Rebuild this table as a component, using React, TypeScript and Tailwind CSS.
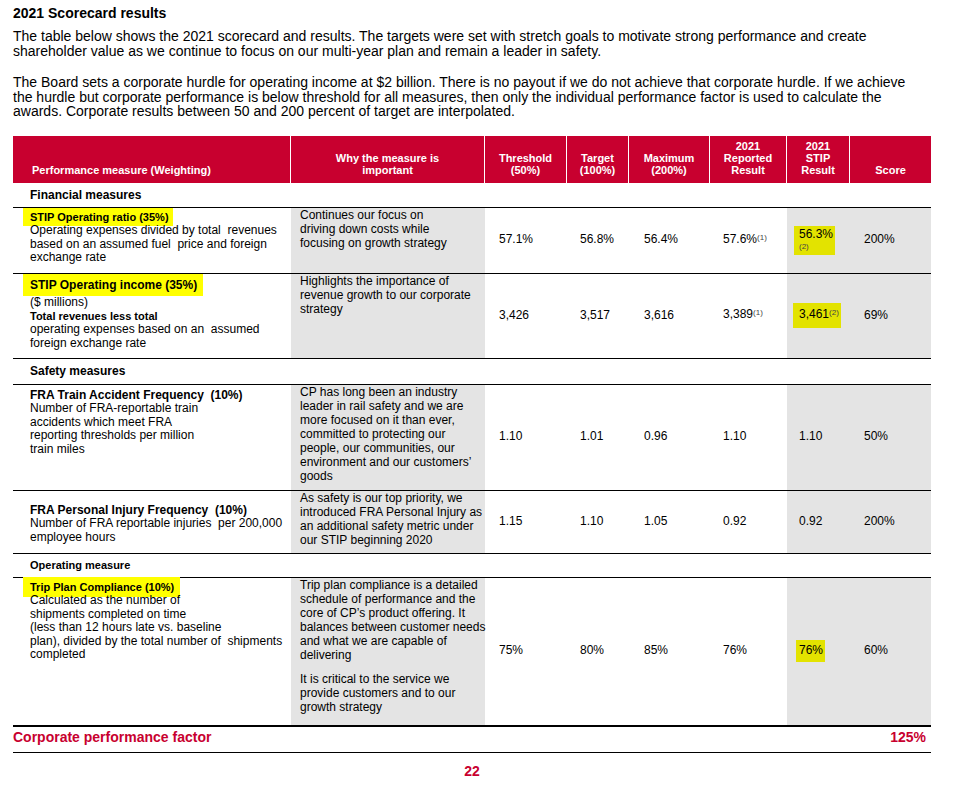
const cols = 'grid grid-cols-[278px_194px_82px_62px_81px_77px_63px_81px]';

const Hl = ({ children, className = '' }: { children: React.ReactNode; className?: string }) => (
  <span className={`bg-[#ffff00] ${className}`}>{children}</span>
);

const Sup = ({ n }: { n: string }) => (
  <span className="text-[8px] text-[#444] relative -top-[3px]">{n}</span>
);

type Nums = [React.ReactNode, React.ReactNode, React.ReactNode, React.ReactNode, React.ReactNode, React.ReactNode];

const Row = ({ h, left, why, nums, whyTop = 'pt-0' }: { h: string; left: React.ReactNode; why: React.ReactNode; nums: Nums; whyTop?: string }) => (
  <div className={`${cols} ${h} border-t border-black text-[12px] leading-[13.5px]`}>
    <div className="pl-[17px] pr-2">{left}</div>
    <div className={`bg-[#e4e4e4] pl-[9px] leading-[14px] whitespace-nowrap ${whyTop}`}>{why}</div>
    <div className="flex items-center pl-[14px]">{nums[0]}</div>
    <div className="flex items-center pl-[13px]">{nums[1]}</div>
    <div className="flex items-center pl-[15px]">{nums[2]}</div>
    <div className="flex items-center pl-[13px]">{nums[3]}</div>
    <div className="flex items-center bg-[#e4e4e4] pl-[12px]">{nums[4]}</div>
    <div className="flex items-center bg-[#e4e4e4] pl-[14px]">{nums[5]}</div>
  </div>
);

const Section = ({ label, h, small }: { label: string; h: string; small?: boolean }) => (
  <div className={`flex items-center pl-[17px] ${h} border-t border-black font-bold ${small ? 'text-[11px]' : 'text-[12px]'}`}>
    {label}
  </div>
);

export default function App() {
  return (
    <div className="w-[955px] h-[792px] bg-white text-black font-['Liberation_Sans',Arial,sans-serif] px-[13px] pt-[5px]">
      <h2 className="text-[14px] leading-[16px] font-bold">2021 Scorecard results</h2>
      <p className="mt-[8px] text-[14px] leading-[14.5px] whitespace-nowrap">
        The table below shows the 2021 scorecard and results. The targets were set with stretch goals to motivate strong performance and create
        <br />
        shareholder value as we continue to focus on our multi-year plan and remain a leader in safety.
      </p>
      <p className="mt-[17px] text-[14px] leading-[14.5px] whitespace-nowrap">
        The Board sets a corporate hurdle for operating income at $2 billion. There is no payout if we do not achieve that corporate hurdle. If we achieve
        <br />
        the hurdle but corporate performance is below threshold for all measures, then only the individual performance factor is used to calculate the
        <br />
        awards. Corporate results between 50 and 200 percent of target are interpolated.
      </p>

      <div className="mt-[17px] w-[918px]">
        <div className={`${cols} h-[47px] bg-[#c8002f] text-white font-bold text-[11px] leading-[12px]`}>
          <div className="flex items-end pb-[7px] pl-[19px] border-r border-white">Performance measure (Weighting)</div>
          <div className="flex items-end justify-center text-center pb-[7px] border-r border-white">Why the measure is<br />important</div>
          <div className="flex items-end justify-center text-center pb-[7px] border-r border-white">Threshold<br />(50%)</div>
          <div className="flex items-end justify-center text-center pb-[7px] border-r border-white">Target<br />(100%)</div>
          <div className="flex items-end justify-center text-center pb-[7px] border-r border-white">Maximum<br />(200%)</div>
          <div className="flex items-end justify-center text-center pb-[7px] border-r border-white">2021<br />Reported<br />Result</div>
          <div className="flex items-end justify-center text-center pb-[7px] border-r border-white">2021<br />STIP<br />Result</div>
          <div className="flex items-end justify-center text-center pb-[7px]">Score</div>
        </div>

        <div className="flex items-center pl-[17px] h-[24px] font-bold text-[12px]">Financial measures</div>

        <Row
          h="h-[66px]"
          left={
            <div className="pt-[3px] whitespace-nowrap">
              <Hl className="-ml-[7px] pl-[7px] pr-[4px] py-[3px] font-bold text-[11px]">STIP Operating ratio (35%)</Hl>
              <div>Operating expenses divided by total &nbsp;revenues</div>
              <div>based on an assumed fuel &nbsp;price and foreign</div>
              <div>exchange rate</div>
            </div>
          }
          why={<>Continues our focus on<br />driving down costs while<br />focusing on growth strategy</>}
          nums={[
            '57.1%',
            '56.8%',
            '56.4%',
            <span>57.6%<Sup n="(1)" /></span>,
            <span className="-ml-[5px] pl-[5px] pr-[2px] py-[3px] bg-[#e3e300] leading-[11px]">
              56.3%
              <br />
              <span className="text-[8px] text-[#444]">(2)</span>
            </span>,
            '200%',
          ]}
        />

        <Row
          h="h-[85px]"
          left={
            <div className="pt-[5px] whitespace-nowrap">
              <Hl className="-ml-[7px] pl-[7px] pr-[6px] py-[4px] font-bold">STIP Operating income (35%)</Hl>
              <div className="mt-[4px]">($ millions)</div>
              <div className="font-bold text-[11px]">Total revenues less total</div>
              <div>operating expenses based on an &nbsp;assumed</div>
              <div>foreign exchange rate</div>
            </div>
          }
          why={<>Highlights the importance of<br />revenue growth to our corporate<br />strategy</>}
          nums={[
            '3,426',
            '3,517',
            '3,616',
            <span>3,389<Sup n="(1)" /></span>,
            <span className="-ml-[6px] pl-[6px] pr-[2px] py-[5px] bg-[#e3e300]">3,461<Sup n="(2)" /></span>,
            '69%',
          ]}
        />

        <Section label="Safety measures" h="h-[26px]" />

        <Row
          h="h-[106px]"
          left={
            <div className="pt-[4px] whitespace-nowrap">
              <div className="font-bold">FRA Train Accident Frequency &nbsp;(10%)</div>
              <div>Number of FRA-reportable train</div>
              <div>accidents which meet FRA</div>
              <div>reporting thresholds per million</div>
              <div>train miles</div>
            </div>
          }
          why={<>CP has long been an industry<br />leader in rail safety and we are<br />more focused on it than ever,<br />committed to protecting our<br />people, our communities, our<br />environment and our customers’<br />goods</>}
          nums={['1.10', '1.01', '0.96', '1.10', '1.10', '50%']}
        />

        <Row
          h="h-[63px]"
          left={
            <div className="pt-[13px] whitespace-nowrap">
              <div className="font-bold">FRA Personal Injury Frequency &nbsp;(10%)</div>
              <div>Number of FRA reportable injuries &nbsp;per 200,000</div>
              <div>employee hours</div>
            </div>
          }
          why={<>As safety is our top priority, we<br />introduced FRA Personal Injury as<br />an additional safety metric under<br />our STIP beginning 2020</>}
          nums={['1.15', '1.10', '1.05', '0.92', '0.92', '200%']}
        />

        <Section label="Operating measure" h="h-[24px]" small />

        <Row
          h="h-[148px]"
          left={
            <div className="pt-[3px] whitespace-nowrap">
              <Hl className="-ml-[7px] pl-[7px] pr-[6px] py-[4px] font-bold text-[11px]">Trip Plan Compliance (10%)</Hl>
              <div>Calculated as the number of</div>
              <div>shipments completed on time</div>
              <div>(less than 12 hours late vs. baseline</div>
              <div>plan), divided by the total number of &nbsp;shipments</div>
              <div>completed</div>
            </div>
          }
          why={
            <>
              <div>Trip plan compliance is a detailed<br />schedule of performance and the<br />core of CP’s product offering. It<br />balances between customer needs<br />and what we are capable of<br />delivering</div>
              <div className="mt-[10px]">It is critical to the service we<br />provide customers and to our<br />growth strategy</div>
            </>
          }
          nums={[
            '75%',
            '80%',
            '85%',
            '76%',
            <span className="-ml-[3px] pl-[3px] pr-[2px] py-[4px] bg-[#e3e300]">76%</span>,
            '60%',
          ]}
        />

        <div className="flex items-start justify-between h-[28px] pt-[2px] leading-[16px] border-t-2 border-b border-black text-[14px] font-bold text-[#c8002f] pr-[5px]">
          <span>Corporate performance factor</span>
          <span>125%</span>
        </div>
      </div>

      <div className="mt-[10px] text-center w-[918px] text-[14px] leading-[16px] font-bold text-[#c8002f]">22</div>
    </div>
  );
}
